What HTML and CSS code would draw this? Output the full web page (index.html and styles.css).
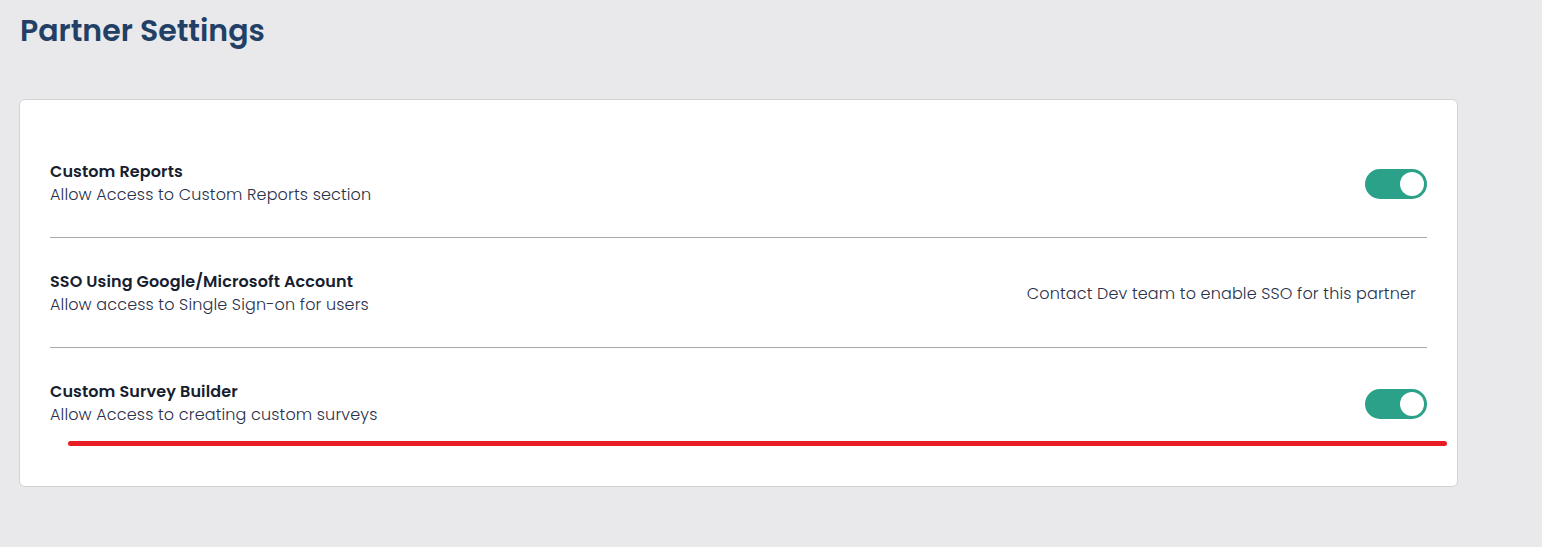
FILE: index.html
```html
<!DOCTYPE html>
<html>
<head>
<meta charset="utf-8">
<link rel="stylesheet" href="styles.css">
</head>
<body>
<div class="page">
  <h1 class="title">Partner Settings</h1>
  <div class="card">
    <div class="row">
      <div class="info">
        <div class="name">Custom Reports</div>
        <div class="desc">Allow Access to Custom Reports section</div>
      </div>
      <div class="toggle on"><span class="knob"></span></div>
    </div>
    <div class="row">
      <div class="info">
        <div class="name">SSO Using Google/Microsoft Account</div>
        <div class="desc">Allow access to Single Sign-on for users</div>
      </div>
      <div class="note">Contact Dev team to enable SSO for this partner</div>
    </div>
    <div class="row last">
      <div class="info">
        <div class="name">Custom Survey Builder</div>
        <div class="desc">Allow Access to creating custom surveys</div>
      </div>
      <div class="toggle on"><span class="knob"></span></div>
    </div>
    <div class="mark"></div>
  </div>
</div>
</body>
</html>
```
FILE: styles.css
```css
html, body {
  margin: 0;
  padding: 0;
  background: #e9e8eb;
}
body {
  font-family: Poppins, "Open Sans", "Liberation Sans", sans-serif;
}
.page {
  padding: 9px 0 0 19px;
  width: 1439px;
}
.title {
  margin: 0 0 0 1px;
  font-size: 30px;
  line-height: 44px;
  font-weight: 600;
  color: #223f66;
}
.card {
  position: relative;
  margin-top: 46px;
  background: #fff;
  border: 1px solid #d2d2d4;
  border-radius: 6px;
  padding: 28px 30px 29px 30px;
}
.row {
  display: flex;
  align-items: center;
  justify-content: space-between;
  padding: 32px 0 31px 0;
  border-bottom: 1px solid #a9a9ab;
}
.row.last {
  border-bottom: none;
  padding-bottom: 31px;
}
.name {
  font-size: 16px;
  line-height: 23px;
  font-weight: 600;
  letter-spacing: 0.12px;
  color: #16202f;
}
.desc {
  font-size: 16px;
  line-height: 23px;
  font-weight: 300;
  letter-spacing: 0.14px;
  color: #29304a;
}
.note {
  font-size: 16px;
  font-weight: 300;
  letter-spacing: 0.14px;
  color: #29304a;
  margin-right: 11px;
}
.toggle {
  width: 62px;
  height: 30px;
  margin-top: 2px;
  border-radius: 15px;
  background: #2ba189;
  display: flex;
  align-items: center;
  justify-content: flex-end;
  padding: 0 3px;
  box-sizing: border-box;
}
.knob {
  width: 24px;
  height: 24px;
  border-radius: 50%;
  background: #fff;
}
.mark {
  position: absolute;
  left: 48px;
  top: 341px;
  width: 1379px;
  height: 5px;
  border-radius: 3px;
  background: #e81c24;
}
```
